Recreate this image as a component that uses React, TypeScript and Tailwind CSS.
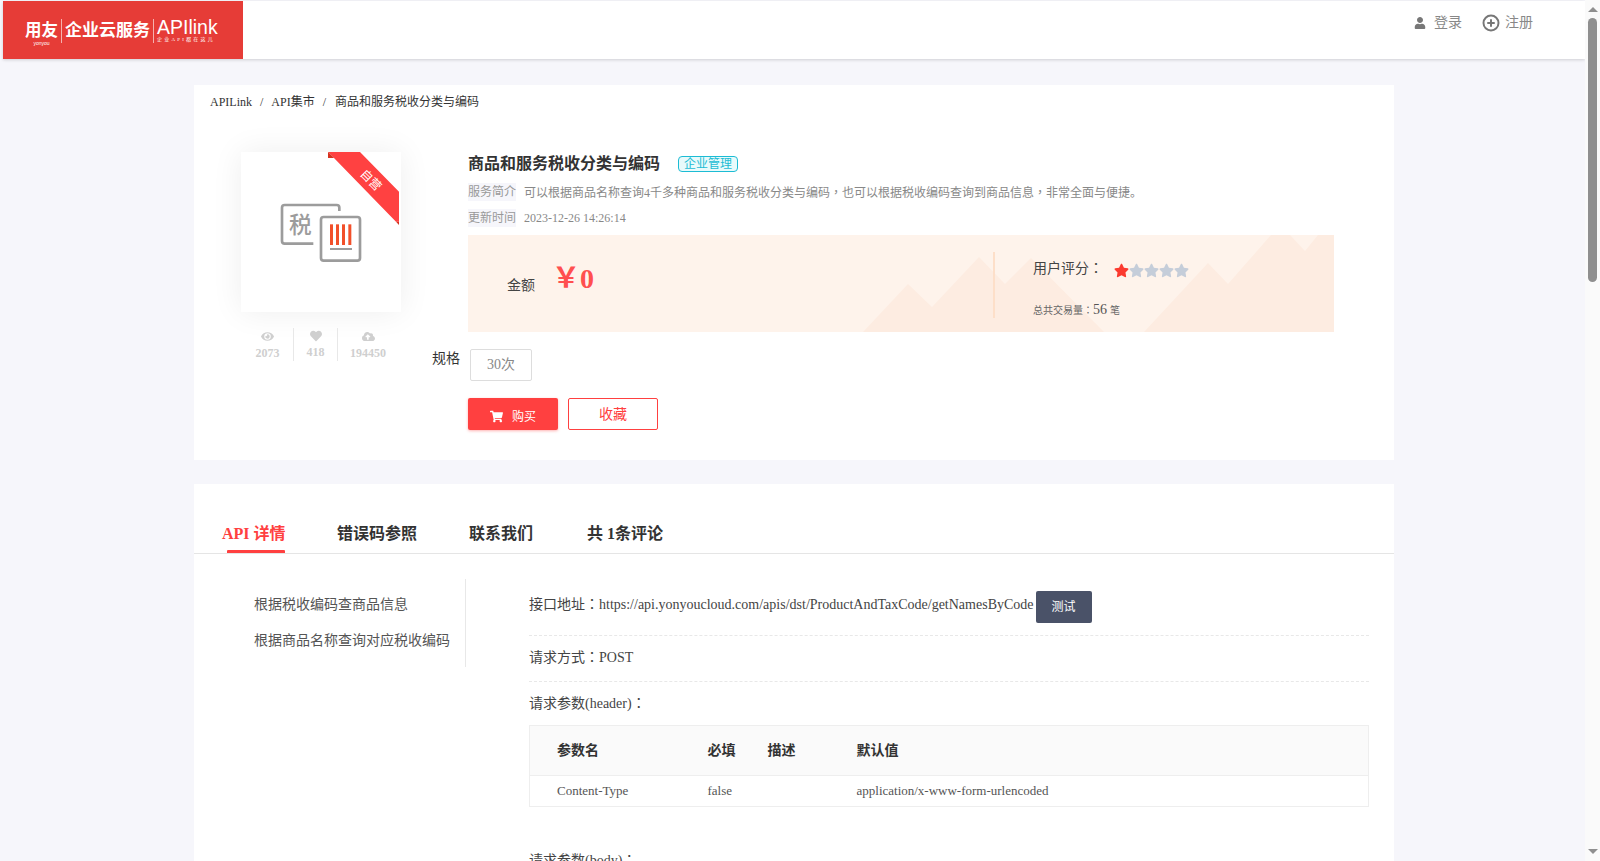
import type { ReactNode } from "react";
import { FaCloudUploadAlt, FaEye, FaHeart, FaShoppingCart, FaStar, FaUser } from "react-icons/fa";
import { CirclePlus } from "lucide-react";

// full-width punctuation sits centred in the cell in the screenshot
function Punct({ children }: { children: ReactNode }) {
  return <span className="font-['Noto_Sans_CJK_TC',sans-serif] leading-[0]">{children}</span>;
}

function Logo() {
  return (
    <div className="flex h-[58px] w-[240px] shrink-0 items-center bg-[#e63c37] pl-[22px] pt-[1px] text-white">
      <div className="flex h-[24px] w-[33px] shrink-0 flex-col items-center">
        <span className="whitespace-nowrap text-[16.5px] font-bold leading-[24px]">用友</span>
        <span className="-mt-[2px] font-['Liberation_Sans',sans-serif] text-[5px] leading-[5px]">yonyou</span>
      </div>
      <div className="mx-[3px] h-[24px] w-px bg-white/60" />
      <span className="whitespace-nowrap text-[17px] font-bold leading-[24px]">企业云服务</span>
      <div className="mx-[3px] h-[24px] w-px bg-white/60" />
      <div className="flex flex-col">
        <span className="font-['Liberation_Sans',sans-serif] text-[19.5px] leading-[18px]">APIlink</span>
        <span className="whitespace-nowrap text-[5px] leading-[8px] tracking-[2.2px]">企业API都在这儿</span>
      </div>
    </div>
  );
}

function Header() {
  return (
    <header className="ml-[3px] mt-px flex h-[58px] items-start justify-between bg-white shadow-[0_1px_3px_rgba(0,0,0,0.16)]">
      <Logo />
      <div className="mr-[52px] mt-[13px] flex items-center text-[14px] leading-[18px] text-[#888]">
        <FaUser className="mr-[8px] h-[12px] w-[12px] text-[#777]" />
        <span>登录</span>
        <CirclePlus className="ml-[20px] mr-[5px] h-[18px] w-[18px] text-[#777]" strokeWidth={2.6} />
        <span>注册</span>
      </div>
    </header>
  );
}

function ProductArt() {
  return (
    <div className="h-[160px] w-[160px] bg-white shadow-[0_0_30px_rgba(0,0,0,0.07)]">
      <svg viewBox="123 66 480 480" className="h-[160px] w-[160px]">
        <polygon points="384,66 480,66 597,185 597,275 588,275 402,84" fill="#ff4141" />
        <polygon points="384,66 402,84 384,84" fill="#d5321f" />
        <polygon points="588,275 597,275 597,285" fill="#d5321f" />
        <text
          x="511"
          y="162"
          transform="rotate(45 511 152)"
          textAnchor="middle"
          fontSize="36"
          fill="#fff"
          fontFamily="'Noto Sans CJK SC', sans-serif"
        >
          自营
        </text>
        <path
          d="M418 243 V233 Q418 225 410 225 H254 Q246 225 246 233 V333 Q246 341 254 341 H340"
          fill="none"
          stroke="#9c9c9c"
          strokeWidth="8"
        />
        <rect x="363" y="261" width="117" height="131" rx="8" fill="none" stroke="#9c9c9c" strokeWidth="8" />
        <text
          x="301"
          y="309"
          textAnchor="middle"
          fontSize="68"
          fontWeight="500"
          fill="#9c9c9c"
          fontFamily="'Noto Sans CJK SC', sans-serif"
        >
          税
        </text>
        <rect x="390" y="283" width="9" height="62" fill="#f2502a" />
        <rect x="408" y="283" width="9" height="62" fill="#f2502a" />
        <rect x="426" y="283" width="9" height="62" fill="#f2502a" />
        <rect x="445" y="283" width="9" height="62" fill="#f2502a" />
        <rect x="390" y="354" width="66" height="6" fill="#9c9c9c" />
      </svg>
    </div>
  );
}

function Stats() {
  const items = [
    { icon: <FaEye className="h-[13px] w-[13px]" />, value: "2073", width: "w-[52px]" },
    { icon: <FaHeart className="h-[12px] w-[12px]" />, value: "418", width: "w-[44px]" },
    { icon: <FaCloudUploadAlt className="h-[13px] w-[13px]" />, value: "194450", width: "w-[60px]" },
  ];
  return (
    <div className="ml-px mt-[16px] flex text-[12px] font-bold text-[#cfcfcf]">
      {items.map((s, i) => (
        <div
          key={s.value}
          className={`flex h-[33px] ${s.width} flex-col items-center ${i < 2 ? "border-r border-[#e8e8e8]" : ""}`}
        >
          <span className="mt-[2px] flex h-[14px] items-center">{s.icon}</span>
          <span className="mt-px leading-[18px]">{s.value}</span>
        </div>
      ))}
    </div>
  );
}

function PriceBox() {
  return (
    <div className="relative mt-[8px] flex h-[97px] w-[866px] bg-[#fef3eb]">
      <svg viewBox="0 0 866 97" className="absolute inset-0 h-full w-full">
        <path d="M395 97 L440 49 L464 72 L511 22 L537 49 L563 23 L636 97 Z" fill="#fdece1" />
        <path d="M676 97 L740 28 L760 49 L803 0 L822 0 L837 16 L850 0 L866 0 V97 Z" fill="#fdece1" />
      </svg>
      <div className="relative flex w-[525px] items-center pl-[39px]">
        <span className="mt-[4px] text-[14px] text-[#444]">金额</span>
        <span className="-mt-[10px] ml-[17px] text-[28px] font-bold leading-[36px] text-[#ff4f4f]">￥0</span>
      </div>
      <div className="relative mt-[17px] h-[66px] w-[2px] bg-[#fddfc9]" />
      <div className="relative pl-[38px] pt-[24px]">
        <div className="flex h-[18px] items-center text-[14px] text-[#444]">
          <span className="w-[81px]">
            用户评分<Punct>：</Punct>
          </span>
          <span className="mt-[4px] flex">
            {[0, 1, 2, 3, 4].map((n) => (
              <FaStar key={n} className={`h-[15px] w-[15px] ${n === 0 ? "text-[#fb3a2f]" : "text-[#c5cdd9]"}`} />
            ))}
          </span>
        </div>
        <div className="mt-[22px] flex items-baseline text-[10px] text-[#666]">
          总共交易量<Punct>：</Punct>
          <span className="text-[14px] text-[#555]">56</span>
          <span className="ml-[3px]">笔</span>
        </div>
      </div>
    </div>
  );
}

function ProductCard() {
  return (
    <section className="ml-[194px] mt-[26px] h-[375px] w-[1200px] bg-white">
      <nav className="flex h-[32px] items-center pl-[16px] pt-px text-[12px] text-[#333]">
        <span>APILink</span>
        <span className="mx-[8px]">/</span>
        <span>API集市</span>
        <span className="ml-[8px] mr-[9px]">/</span>
        <span>商品和服务税收分类与编码</span>
      </nav>
      <div className="mt-[35px] flex">
        <div className="ml-[47px] w-[227px]">
          <ProductArt />
          <Stats />
        </div>
        <div>
          <div className="flex h-[22px] items-center pt-px">
            <h1 className="text-[16px] font-bold text-[#333]">商品和服务税收分类与编码</h1>
            <span className="ml-[18px] flex h-[16px] w-[60px] items-center justify-center rounded-[4px] border border-[#1cbcd4] bg-[#e8fafb] text-[12px] text-[#1cbcd4]">
              企业管理
            </span>
          </div>
          <div className="mt-[9px] flex h-[18px] items-center text-[12px] text-[#888]">
            <span className="mr-[8px] bg-[#f6f6fb] leading-[18px] text-[#999]">服务简介</span>
            <span className="pt-px">
              可以根据商品名称查询4千多种商品和服务税收分类与编码<Punct>，</Punct>
              也可以根据税收编码查询到商品信息<Punct>，</Punct>非常全面与便捷。
            </span>
          </div>
          <div className="mt-[8px] flex h-[18px] items-center text-[12px] text-[#888]">
            <span className="mr-[8px] bg-[#f6f6fb] leading-[18px] text-[#999]">更新时间</span>
            2023-12-26 14:26:14
          </div>
          <PriceBox />
          <div className="-ml-[36px] mt-[17px] flex h-[32px]">
            <span className="w-[38px] pt-px text-[14px] leading-[18px] text-[#333]">规格</span>
            <span className="flex h-[32px] w-[62px] items-center justify-center rounded-[2px] border border-[#ddd] pb-px text-[14px] text-[#888]">
              30次
            </span>
          </div>
          <div className="mt-[17px] flex gap-[10px]">
            <button className="flex h-[32px] w-[90px] items-center justify-center rounded-[2px] bg-[#ff4040] pt-[5px] text-[12px] text-white shadow-[0_1px_3px_rgba(255,64,64,0.4)]">
              <FaShoppingCart className="mr-[9px] h-[13px] w-[13px]" />
              购买
            </button>
            <button className="h-[32px] w-[90px] rounded-[2px] border border-[#ff4040] text-[14px] text-[#ff4040]">
              收藏
            </button>
          </div>
        </div>
      </div>
    </section>
  );
}

function Tabs() {
  const tabs = [
    { label: "错误码参照", w: "w-[132px]" },
    { label: "联系我们", w: "w-[118px]" },
    { label: "共 1条评论", w: "w-[100px]" },
  ];
  return (
    <div className="flex h-[70px] items-end border-b border-[#e5e5e5] pl-[28px] text-[16px] font-bold text-[#333]">
      <div className="relative h-[31px] w-[115px] leading-[24px] text-[#ff4040]">
        API 详情
        <span className="absolute bottom-0 left-[5px] h-[3px] w-[58px] rounded-t-[1px] bg-[#ff4040]" />
      </div>
      {tabs.map((t) => (
        <div key={t.label} className={`h-[31px] ${t.w} leading-[24px]`}>
          {t.label}
        </div>
      ))}
    </div>
  );
}

function ParamTable() {
  return (
    <table className="mt-[12px] w-[840px] table-fixed border border-[#eee] text-left">
      <thead>
        <tr className="h-[50px] border-b border-[#eee] bg-[#fafafa] text-[14px] font-bold text-[#333]">
          <th className="w-[178px] pl-[27px]">参数名</th>
          <th className="w-[60px]">必填</th>
          <th className="w-[89px]">描述</th>
          <th>默认值</th>
        </tr>
      </thead>
      <tbody>
        <tr className="h-[31px] text-[13px] text-[#555]">
          <td className="pl-[27px]">Content-Type</td>
          <td>false</td>
          <td />
          <td>application/x-www-form-urlencoded</td>
        </tr>
      </tbody>
    </table>
  );
}

function DetailCard() {
  return (
    <section className="ml-[194px] mt-[24px] w-[1200px] bg-white pb-[40px]">
      <Tabs />
      <div className="mt-[25px] flex">
        <div className="h-[88px] w-[272px] border-r border-[#e8e8e8] pl-[60px] pt-[17px] text-[14px] text-[#555]">
          <div className="leading-[18px]">根据税收编码查商品信息</div>
          <div className="mt-[18px] leading-[18px]">根据商品名称查询对应税收编码</div>
        </div>
        <div className="ml-[63px] w-[840px] text-[14px] text-[#444]">
          <div className="mt-[12px] flex h-[32px] items-start">
            <span className="mt-[5px] leading-[18px]">
              接口地址<Punct>：</Punct>https://api.yonyoucloud.com/apis/dst/ProductAndTaxCode/getNamesByCode
            </span>
            <button className="ml-[2px] h-[32px] w-[56px] rounded-[2px] bg-[#4a5268] text-[12px] text-white">测试</button>
          </div>
          <div className="mt-[12px] h-[35px] border-t border-dashed border-[#e8e8e8] pt-[13px] leading-[18px]">
            请求方式<Punct>：</Punct>POST
          </div>
          <div className="mt-[11px] border-t border-dashed border-[#e8e8e8] pt-[13px] leading-[18px]">
            请求参数(header)<Punct>：</Punct>
          </div>
          <ParamTable />
          <div className="mt-[45px] leading-[18px]">
            请求参数(body)<Punct>：</Punct>
          </div>
        </div>
      </div>
    </section>
  );
}

function Scrollbar() {
  return (
    <div className="flex w-[15px] shrink-0 flex-col items-center bg-[#fafafa]">
      <div className="mt-[7px] h-0 w-0 border-x-[5px] border-b-[5px] border-x-transparent border-b-[#8f8f8f]" />
      <div className="mt-[6px] h-[264px] w-[9px] rounded-full bg-[#8f8f8f]" />
      <div className="mb-[7px] mt-auto h-0 w-0 border-x-[5px] border-t-[5px] border-x-transparent border-t-[#8f8f8f]" />
    </div>
  );
}

export default function App() {
  return (
    <div className="flex h-[861px] w-[1600px] overflow-hidden bg-[#f6f6fb] font-['Liberation_Serif','Noto_Sans_CJK_SC',serif]">
      <div className="min-w-0 flex-1">
        <Header />
        <ProductCard />
        <DetailCard />
      </div>
      <Scrollbar />
    </div>
  );
}
